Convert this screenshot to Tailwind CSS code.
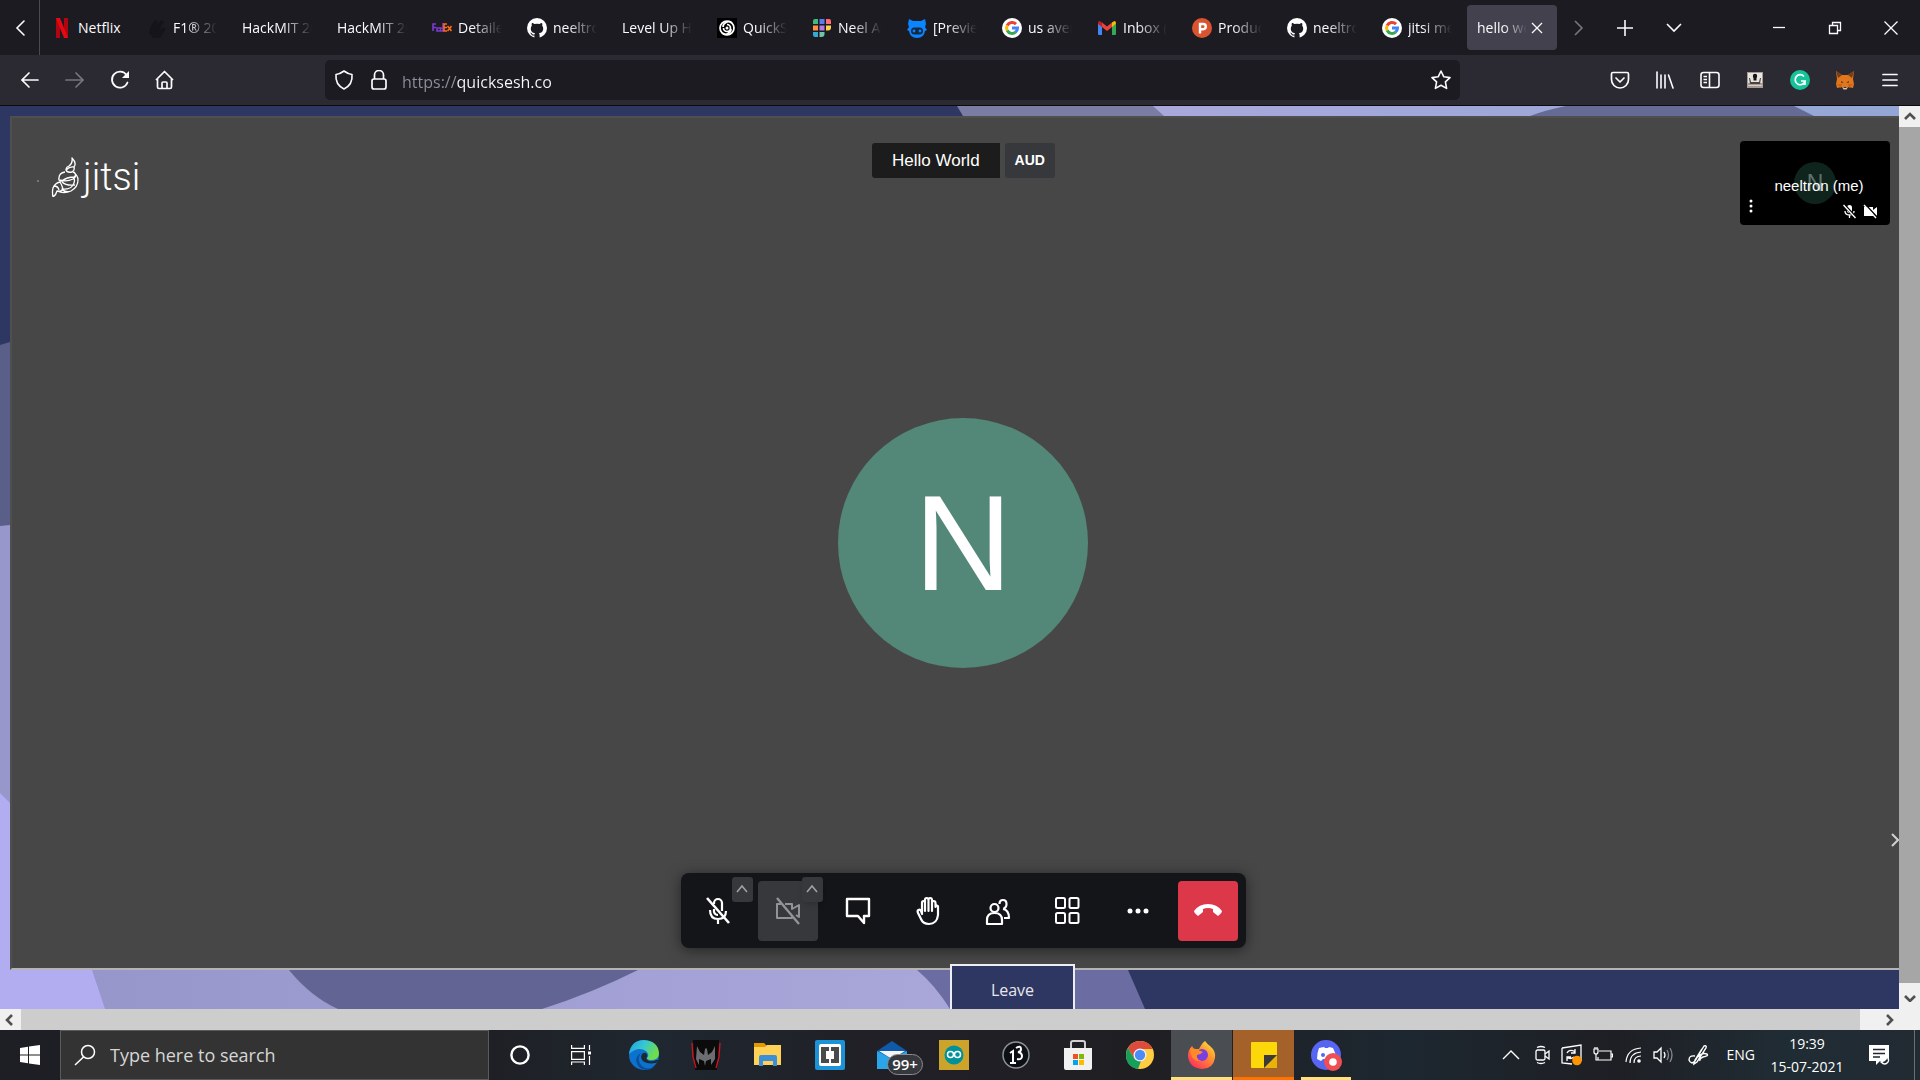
<!DOCTYPE html>
<html lang="en">
<head>
    <meta charset="UTF-8" />
    <meta name="viewport" content="width=device-width, initial-scale=1.0" />
    <title>hello world</title>
    <script src="https://cdn.jsdelivr.net/npm/@tailwindcss/browser@4"></script>
</head>
<body class="h-screen flex flex-col overflow-hidden bg-[#1c1b22] text-[#fbfbfe] font-['Open_Sans','Noto_Sans',sans-serif]">

<!-- shared icons -->
<svg class="hidden">
    <symbol id="github" viewBox="0 0 20 20">
        <circle cx="10" cy="10" r="10" fill="#fff"/>
        <path fill="#1c1b22" d="M7.4 20v-2.6c-2.2.5-2.9-.5-3.3-1.4-.3-.6-.6-1-1.1-1.3 1.1-.3 1.7.4 2.1 1 .6 1 1.5 1 2.4.7.1-.6.3-1 .6-1.3-2.4-.3-4.3-1.400-4.300-4.700 0-1.100.3-2 1-2.700-.2-.7-.2-1.700.1-2.600.9 0 1.900.5 2.600 1a9 9 0 0 1 5 0c.8-.5 1.700-1 2.600-1 .3.9.3 1.900.1 2.600.7.7 1 1.600 1 2.700 0 3.300-1.900 4.400-4.300 4.700.4.4.7 1 .7 2V20z"/>
    </symbol>
    <symbol id="google" viewBox="0 0 20 20">
        <circle cx="10" cy="10" r="10" fill="#fff"/>
        <g fill="none" stroke-width="3">
            <path stroke="#ea4335" d="M5.200 7.500a5.500 5.500 0 0 1 8.800-1.400"/>
            <path stroke="#fbbc05" d="M5.200 12.600a5.500 5.500 0 0 1 0-5.200"/>
            <path stroke="#34a853" d="M13.600 14.200a5.500 5.500 0 0 1-8.400-1.700"/>
            <path stroke="#4285f4" d="M10 10h5.500a5.500 5.500 0 0 1-2 4.200"/>
        </g>
    </symbol>
</svg>

<!-- tab strip -->
<header class="h-[55px] shrink-0 flex items-center text-[14px]">
    <button aria-label="Scroll tabs left" class="w-10 h-full shrink-0 flex items-center justify-center border-r border-[#4a4952]">
        <svg class="size-5" viewBox="0 0 20 20" fill="none" stroke="currentColor" stroke-width="1.600" stroke-linecap="round"><path d="M14 3l-7 7 7 7"/></svg>
    </button>
    <nav class="flex pl-[2px] gap-[5px] shrink-0">
        <button class="w-[90px] h-[45px] px-[10px] flex items-center gap-[6px]">
            <svg class="size-5 shrink-0" viewBox="0 0 20 20"><path fill="#b1060f" d="M4 0h4v20H4zM12 0h4v20h-4z"/><path fill="#e50914" d="M4 0h4l8 20h-4z"/></svg>
            <span>Netflix</span>
        </button>
        <button class="w-[90px] h-[45px] px-[10px] flex items-center gap-[6px]">
            <svg class="size-5 shrink-0" viewBox="0 0 20 20" fill="#15141a"><path d="M4 8l4-6 3 1-3 6 6-7 3 2-5 8 5-3 2 2-6 9H6l-4-5z"/></svg>
            <span class="flex-1 overflow-hidden whitespace-nowrap text-left [mask-image:linear-gradient(to_left,transparent,black_30px)]">F1® 2021</span>
        </button>
        <button class="w-[90px] h-[45px] px-[10px] flex items-center">
            <span class="flex-1 overflow-hidden whitespace-nowrap text-left [mask-image:linear-gradient(to_left,transparent,black_30px)]">HackMIT 2021</span>
        </button>
        <button class="w-[90px] h-[45px] px-[10px] flex items-center">
            <span class="flex-1 overflow-hidden whitespace-nowrap text-left [mask-image:linear-gradient(to_left,transparent,black_30px)]">HackMIT 2021</span>
        </button>
        <button class="w-[90px] h-[45px] px-[10px] flex items-center gap-[6px]">
            <svg class="size-5 shrink-0" viewBox="0 0 20 20"><g fill="none" stroke-width="1.600"><path stroke="#7a3bd0" d="M1 13V6h3M1 9.500h3M8 10H5v3h3M11 5v8H8.500v-3H11"/><path stroke="#ff6a13" d="M15 6h-3v7h3M12 9.500h3M15.500 8l4 5M19.500 8l-4 5"/></g></svg>
            <span class="flex-1 overflow-hidden whitespace-nowrap text-left [mask-image:linear-gradient(to_left,transparent,black_30px)]">Detailed</span>
        </button>
        <button class="w-[90px] h-[45px] px-[10px] flex items-center gap-[6px]">
            <svg class="size-5 shrink-0"><use href="#github"/></svg>
            <span class="flex-1 overflow-hidden whitespace-nowrap text-left [mask-image:linear-gradient(to_left,transparent,black_30px)]">neeltron</span>
        </button>
        <button class="w-[90px] h-[45px] px-[10px] flex items-center">
            <span class="flex-1 overflow-hidden whitespace-nowrap text-left [mask-image:linear-gradient(to_left,transparent,black_30px)]">Level Up Hack</span>
        </button>
        <button class="w-[90px] h-[45px] px-[10px] flex items-center gap-[6px]">
            <svg class="size-5 shrink-0" viewBox="0 0 20 20"><path fill="#000" d="M0 0h20v20H0z"/><g fill="none" stroke="#fff" stroke-width="1.700"><circle cx="10" cy="10" r="7"/><path d="M10 6.500a3.500 3.500 0 1 1-3.500 3.500M15 5c-4-3-9 0-9 4M5 15c4 3 9 0 9-4"/></g><circle cx="10" cy="10" r="1.500" fill="#fff"/></svg>
            <span class="flex-1 overflow-hidden whitespace-nowrap text-left [mask-image:linear-gradient(to_left,transparent,black_30px)]">QuickSesh</span>
        </button>
        <button class="w-[90px] h-[45px] px-[10px] flex items-center gap-[6px]">
            <svg class="size-5 shrink-0" viewBox="0 0 20 20"><path fill="#3dbb7f" d="M1 6V3q0-2 2-2h3v5z"/><path fill="#5b7cf0" d="M7.500 1h5v5h-5z"/><path fill="#ff6b78" d="M14 1h3q2 0 2 2v3h-5z"/><path fill="#ff9240" d="M1 7.500h5v5H1z"/><path fill="#b17be0" d="M7.500 7.500h5v5h-5z"/><path fill="#ffd24a" d="M14 7.500h5v2q0 3-3 3h-2z"/><path fill="#35a7d8" d="M1 14h5v5H3q-2 0-2-2z"/><path fill="#6cc5a8" d="M7.500 14h5v2q0 3-3 3h-2z"/></svg>
            <span class="flex-1 overflow-hidden whitespace-nowrap text-left [mask-image:linear-gradient(to_left,transparent,black_30px)]">Neel Adwani</span>
        </button>
        <button class="w-[90px] h-[45px] px-[10px] flex items-center gap-[6px]">
            <svg class="size-5 shrink-0" viewBox="0 0 20 20"><path fill="#0a84ff" d="M2 1l4 2h8l4-2 1 5-1 3 2 3-2 1q-1 7-8 7t-8-7l-2-1 2-3-1-3z"/><rect x="4" y="9.500" width="12" height="7" rx="3.500" fill="#14283f"/><circle cx="7" cy="13" r="1.400" fill="#0a84ff"/><circle cx="13" cy="13" r="1.400" fill="#0a84ff"/></svg>
            <span class="flex-1 overflow-hidden whitespace-nowrap text-left [mask-image:linear-gradient(to_left,transparent,black_30px)]">[Preview]</span>
        </button>
        <button class="w-[90px] h-[45px] px-[10px] flex items-center gap-[6px]">
            <svg class="size-5 shrink-0"><use href="#google"/></svg>
            <span class="flex-1 overflow-hidden whitespace-nowrap text-left [mask-image:linear-gradient(to_left,transparent,black_30px)]">us average</span>
        </button>
        <button class="w-[90px] h-[45px] px-[10px] flex items-center gap-[6px]">
            <svg class="size-5 shrink-0" viewBox="0 0 20 20"><path fill="#4285f4" d="M1 5l4 3v9H2q-1 0-1-1z"/><path fill="#34a853" d="M15 8l4-3v11q0 1-1 1h-3z"/><path fill="#fbbc04" d="M15 4.500q4-3.500 4 1L15 9z"/><path fill="#c5221f" d="M1 5.500q0-4.500 4-1V9L1 6z"/><path fill="#ea4335" d="M5 4.500l5 4 5-4V9l-5 4-5-4z"/></svg>
            <span class="flex-1 overflow-hidden whitespace-nowrap text-left [mask-image:linear-gradient(to_left,transparent,black_30px)]">Inbox (1)</span>
        </button>
        <button class="w-[90px] h-[45px] px-[10px] flex items-center gap-[6px]">
            <svg class="size-5 shrink-0" viewBox="0 0 20 20"><circle cx="10" cy="10" r="10" fill="#da552f"/><path fill="none" stroke="#fff" stroke-width="2.400" d="M8 15.500V6h3.200a2.500 2.500 0 0 1 0 5.200H8"/></svg>
            <span class="flex-1 overflow-hidden whitespace-nowrap text-left [mask-image:linear-gradient(to_left,transparent,black_30px)]">Product</span>
        </button>
        <button class="w-[90px] h-[45px] px-[10px] flex items-center gap-[6px]">
            <svg class="size-5 shrink-0"><use href="#github"/></svg>
            <span class="flex-1 overflow-hidden whitespace-nowrap text-left [mask-image:linear-gradient(to_left,transparent,black_30px)]">neeltron</span>
        </button>
        <button class="w-[90px] h-[45px] px-[10px] flex items-center gap-[6px]">
            <svg class="size-5 shrink-0"><use href="#google"/></svg>
            <span class="flex-1 overflow-hidden whitespace-nowrap text-left [mask-image:linear-gradient(to_left,transparent,black_30px)]">jitsi meet</span>
        </button>
        <button class="w-[90px] h-[45px] px-[10px] flex items-center rounded-[4px] bg-[#42414d]">
            <span class="flex-1 overflow-hidden whitespace-nowrap text-left [mask-image:linear-gradient(to_left,transparent,black_24px)]">hello world</span>
            <svg class="size-5 shrink-0" viewBox="0 0 20 20" stroke="currentColor" stroke-width="1.300"><path d="M5 5l10 10M15 5L5 15"/></svg>
        </button>
    </nav>
    <div class="flex items-center ml-[11px] shrink-0">
        <button aria-label="Scroll tabs right" class="size-5 text-[#77767e]"><svg viewBox="0 0 20 20" fill="none" stroke="currentColor" stroke-width="1.600"><path d="M7 3l7 7-7 7"/></svg></button>
        <button aria-label="New tab" class="size-5 ml-[27px]"><svg viewBox="0 0 20 20" stroke="currentColor" stroke-width="1.600"><path d="M10 2v16M2 10h16"/></svg></button>
        <button aria-label="List all tabs" class="size-5 ml-[29px]"><svg viewBox="0 0 20 20" fill="none" stroke="currentColor" stroke-width="1.600"><path d="M3 6l7 7 7-7"/></svg></button>
    </div>
    <div class="flex items-center gap-9 ml-auto pr-[19px] shrink-0">
        <button aria-label="Minimize" class="size-5"><svg viewBox="0 0 20 20" stroke="currentColor" stroke-width="1.300"><path d="M4 9.500h12"/></svg></button>
        <button aria-label="Restore" class="size-5"><svg viewBox="0 0 20 20" fill="none" stroke="currentColor" stroke-width="1.300"><path d="M4.500 7.500h8v8h-8zM7.500 7.500v-3h8v8h-3"/></svg></button>
        <button aria-label="Close" class="size-5"><svg viewBox="0 0 20 20" stroke="currentColor" stroke-width="1.300"><path d="M3.500 3.500l13 13M16.500 3.500l-13 13"/></svg></button>
    </div>
</header>

<!-- navigation bar -->
<div class="h-[51px] shrink-0 flex items-center bg-[#2b2a33] border-b border-[#0c0c0d] px-5">
    <div class="flex gap-[25px] w-[305px] shrink-0">
        <button aria-label="Back" class="size-5"><svg viewBox="0 0 20 20" fill="none" stroke="currentColor" stroke-width="1.700" stroke-linecap="round"><path d="M18 10H2M9 3l-7 7 7 7"/></svg></button>
        <button aria-label="Forward" class="size-5 text-[#77767e]"><svg viewBox="0 0 20 20" fill="none" stroke="currentColor" stroke-width="1.700" stroke-linecap="round"><path d="M1 10h17M11 3l7 7-7 7"/></svg></button>
        <button aria-label="Reload" class="size-5"><svg viewBox="0 0 20 20" fill="none" stroke="currentColor" stroke-width="1.800" stroke-linecap="round"><path d="M17.500 12.500a8 8 0 1 1-1-7.500"/><path fill="currentColor" stroke="none" d="M19 1v7h-7z"/></svg></button>
        <button aria-label="Home" class="size-5"><svg viewBox="0 0 20 20" fill="none" stroke="currentColor" stroke-width="1.700" stroke-linejoin="round"><path d="M1 10l8.500-8.500L18 10M2.500 8.500V17q0 1.500 1.500 1.500h11q1.500 0 1.500-1.500V8.500M7 18v-5q0-1 1-1h3q1 0 1 1v5"/></svg></button>
    </div>
    <div class="flex items-center h-10 w-[1135px] rounded-[5px] bg-[#1c1b22] px-[9px]">
        <svg class="size-5 shrink-0" viewBox="0 0 20 20" fill="none" stroke="currentColor" stroke-width="1.600" stroke-linejoin="round"><path d="M10 1q4 3 8 3.500 1 10-8 14.500Q1 14.500 2 4.500 6 4 10 1z"/></svg>
        <svg class="size-5 ml-[15px] shrink-0" viewBox="0 0 20 20" fill="none" stroke="currentColor" stroke-width="1.700"><rect x="3" y="9" width="14" height="10" rx="2"/><path d="M5.500 9V5a4.500 4.500 0 0 1 9 0v4"/></svg>
        <input type="text" aria-label="Address" value="https://quicksesh.co" class="flex-1 ml-[13px] pt-[3px] text-base outline-none bg-clip-text text-transparent bg-[linear-gradient(90deg,#8f8f9d_55px,#fbfbfe_55px)]" />
        <button aria-label="Bookmark" class="size-5"><svg viewBox="0 0 20 20" fill="none" stroke="currentColor" stroke-width="1.600" stroke-linejoin="round"><path d="M10 1l2.700 5.700 6.300.9-4.600 4.300 1.200 6.500L10 15.300l-5.600 3.100 1.200-6.500L1 7.600l6.300-.9z"/></svg></button>
    </div>
    <div class="flex gap-[25px] ml-auto shrink-0">
        <button aria-label="Pocket" class="size-5"><svg viewBox="0 0 20 20" fill="none" stroke="currentColor" stroke-width="1.700" stroke-linecap="round" stroke-linejoin="round"><path d="M3 2.500h14q1.500 0 1.500 1.500v5.500a8.500 8.500 0 0 1-17 0V4q0-1.500 1.500-1.500zM6 8l4 4 4-4"/></svg></button>
        <button aria-label="Library" class="size-5"><svg viewBox="0 0 20 20" fill="none" stroke="currentColor" stroke-width="1.600" stroke-linecap="round"><path d="M2 2v16M6 5v13M10 5v13M13.500 5L18 18"/></svg></button>
        <button aria-label="Sidebars" class="size-5"><svg viewBox="0 0 20 20" fill="none" stroke="currentColor" stroke-width="1.600"><rect x="1" y="2.500" width="18" height="15" rx="2.500"/><path d="M9.500 2.500v15M3.500 6.500h3.500M3.500 9.500h3.500M3.500 12.500h3.500"/></svg></button>
        <button aria-label="Extension" class="size-5"><svg viewBox="0 0 20 20"><path fill="#a89a90" d="M2 2h16v16H2z"/><path fill="#e8e4e0" d="M3 3h14v10H3z"/><circle cx="10" cy="6" r="2.200" fill="#141414"/><path fill="#141414" d="M8.500 7h3v3.500h-3z"/><path fill="#4a4340" d="M4 8l1 0 1 4h8l1-4h1l-1 6H5z"/><path fill="#d8cfc8" d="M3 15h14v1H3z"/></svg></button>
        <button aria-label="Grammarly" class="size-5"><svg viewBox="0 0 20 20"><circle cx="10" cy="10" r="10" fill="#15c39a"/><path fill="none" stroke="#fff" stroke-width="1.700" d="M14 6.500a5 5 0 1 0 1 4.500h-4M15 10.500V15"/></svg></button>
        <button aria-label="MetaMask" class="size-5"><svg viewBox="0 0 20 20"><path fill="#e2761b" d="M1 1l6 4h6l6-4-1 8 1 5-1 4-5-1-2 2H9l-2-2-5 1-1-4 1-5z"/><path fill="#763d16" d="M1 1l6 4-4 3zM19 1l-6 4 4 3z"/><path fill="#cd6116" d="M2 14h5l-1 4zM18 14h-5l1 4z"/><path fill="#233447" d="M6 11l2.500 1.500L6.500 13zM14 11l-2.500 1.500 2 .5zM8.500 17h3l-.5 1.500H9z"/><path fill="#d7c1b3" d="M7 17l2 1h2l2-1-1.500 2.500h-3z"/></svg></button>
        <button aria-label="Menu" class="size-5"><svg viewBox="0 0 20 20" stroke="currentColor" stroke-width="1.700" stroke-linecap="round"><path d="M3 4.500h14M3 10h14M3 15.500h14"/></svg></button>
    </div>
</div>

<!-- page with its scrollbars -->
<main class="flex-1 min-h-0 grid grid-cols-[1fr_21px] grid-rows-[1fr_21px]">
    <div class="relative overflow-hidden flex flex-col pt-[10px] pl-[10px] bg-[#2e3761]">
        <!-- wallpaper -->
        <svg class="absolute inset-0 size-full" viewBox="0 0 1899 903" preserveAspectRatio="none">
            <defs>
                <linearGradient id="sky"><stop offset="0" stop-color="#a9a8db"/><stop offset="1" stop-color="#94a6d6"/></linearGradient>
                <linearGradient id="lilac"><stop offset="0" stop-color="#9796cb"/><stop offset="1" stop-color="#a9a7da"/></linearGradient>
            </defs>
            <path fill="#7a7ca4" d="M957 0h250v10H963z"/>
            <path fill="url(#sky)" d="M1153 0h746v10h-735z"/>
            <path fill="#656b94" d="M1530 10q16-6 36-10h228l20 10z"/>
            <path fill="#5a5f89" d="M0 239l10-3v190H0z"/>
            <path fill="#9897cc" d="M0 420l10-1v300H0z"/>
            <path fill="url(#lilac)" d="M80 864h870v39H80z"/>
            <path fill="#b2adf1" d="M0 687l10 10v167h82l13 39H0z"/>
            <path fill="#626594" d="M289 864q22 27 49 39h204q50-16 96-39z"/>
            <path fill="#6b6da2" d="M917 864h211l17 39H950q-15-24-33-39z"/>
        </svg>

        <!-- meeting -->
        <section class="relative flex-1 -mr-[17px] flex flex-col justify-between border-2 border-[#4f4f4f] border-b-[#b4b4b4] bg-[#474747] font-['Liberation_Sans',sans-serif]">
            <div class="absolute inset-0 flex items-center justify-center">
                <div class="size-[250px] rounded-full bg-[#538777] flex items-center justify-center text-[136px] text-white">N</div>
            </div>
            <div class="relative flex items-start justify-between pl-[25px] pr-6 pt-[23px]">
                <a href="#" class="flex-1 flex items-center gap-3 text-white">
                    <span class="size-[2px] mt-6 bg-[#777]"></span>
                    <span class="flex items-center pt-4">
                        <svg class="w-8 h-10" viewBox="0 0 32 40" fill="none" stroke="#fff" stroke-width="1.300" stroke-linejoin="round"><path d="M21 1q5 5 2 9 1 3-2 5-5 1-6-2 0-3 3-4 4-3 3-8zM15 13q4-4 8-3M14 15q-6 1-6 6-1 3 3 3 5-4 12-4 3-2 0-5M22 15q5 3 5 8 0 7-7 11-6 2-9-2 8 1 11-4 3-5 0-8M8 23q8 2 14-1 5-3 1-7M11 25q4 4 13 3M9 25q-5 1-7 6-1 4 0 9 3-2 4-6 5 1 6-2-1-4-3-7zM3 29q4 0 5 4M6 34q7 3 14 0"/></svg>
                        <span class="text-[38px] leading-10 font-light font-['Roboto',sans-serif]">jitsi</span>
                    </span>
                </a>
                <div class="flex gap-[5px] pt-[2px] leading-[35px]">
                    <div class="px-5 rounded-l-[3px] bg-[#1c1c1c] text-[17px] leading-[35px] text-white">Hello World</div>
                    <div class="px-[10px] rounded-[3px] bg-[#36383c] text-[14px] leading-[35px] font-bold text-white">AUD</div>
                </div>
                <div class="flex-1 flex justify-end">
                    <div class="relative w-[150px] h-[84px] rounded-[4px] bg-black">
                        <div class="absolute inset-0 flex items-center justify-center">
                            <div class="size-[42px] rounded-full bg-[#10241e] text-[#60716b] text-[23px] flex items-center justify-center">N</div>
                        </div>
                        <div class="absolute inset-x-0 top-9 pl-2 text-center text-[15px] leading-[18px] text-white">neeltron (me)</div>
                        <svg class="absolute left-1 bottom-3 size-[14px]" viewBox="0 0 14 14" fill="#fff"><circle cx="7" cy="2" r="1.500"/><circle cx="7" cy="7" r="1.500"/><circle cx="7" cy="12" r="1.500"/></svg>
                        <div class="absolute right-3 bottom-[6px] flex gap-[6px]">
                            <svg class="size-[15px]" viewBox="0 0 15 15" fill="#fff"><rect x="5" y="1" width="5" height="8" rx="2.500"/><path fill="none" stroke="#fff" stroke-width="1.300" d="M3 7q0 4 4.500 4T12 7M7.500 11v3"/><path stroke="#000" stroke-width="3" d="M2 1l12 13"/><path stroke="#fff" stroke-width="1.400" d="M1.500 1l12 13"/></svg>
                            <svg class="size-[15px]" viewBox="0 0 15 15" fill="#fff"><path d="M1 3h9v3l4-3v9l-4-2v2H1z"/><path stroke="#000" stroke-width="1.500" d="M2 0l13 14"/><path stroke="#fff" stroke-width="1.400" d="M1 1l12 13"/></svg>
                        </div>
                    </div>
                </div>
            </div>
            <button aria-label="Hide filmstrip" class="absolute right-3 bottom-[120px] w-3 h-4"><svg viewBox="0 0 12 16" fill="none" stroke="#d0d0d0" stroke-width="2"><path d="M2 2l6 6-6 6"/></svg></button>

            <!-- call controls -->
            <div class="relative mx-auto mb-5 h-[75px] pl-[7px] pr-2 flex items-center gap-[10px] rounded-lg bg-[#141519] shadow-[0_2px_14px_rgba(0,0,0,0.5)] text-white">
                <div class="relative">
                    <button aria-label="Unmute" class="size-[60px] flex items-center justify-center">
                        <svg class="size-[30px]" viewBox="0 0 30 30" fill="none" stroke="currentColor" stroke-width="2.200"><path d="M11 8V7a4 4 0 0 1 8 0v8M11 13v3q1 3 4 3M7 14q0 9 8 9t8-8M15 23v5"/><path stroke-width="2.600" d="M4 2l22 25"/></svg>
                    </button>
                    <button aria-label="Audio settings" class="absolute -top-1 right-[-5px] w-[21px] h-[25px] rounded-[3px] bg-[#36383c] text-[#a0a1a4] flex items-center justify-center"><svg class="size-3" viewBox="0 0 12 12" fill="none" stroke="currentColor" stroke-width="1.600"><path d="M1 9l5-6 5 6"/></svg></button>
                </div>
                <div class="relative">
                    <button aria-label="Start camera" class="size-[60px] rounded-[4px] bg-[#36383c] text-[#929396] flex items-center justify-center">
                        <svg class="size-[30px]" viewBox="0 0 30 30" fill="none" stroke="currentColor" stroke-width="2" stroke-linejoin="round"><path d="M8 8H4v14h15v-2M12 8h7v5l7-4v12l-3-2"/><path stroke-width="2.400" d="M4 2l22 26"/></svg>
                    </button>
                    <button aria-label="Video settings" class="absolute -top-1 right-[-5px] w-[21px] h-[25px] rounded-[3px] bg-[#36383c] text-[#a0a1a4] shadow-md flex items-center justify-center"><svg class="size-3" viewBox="0 0 12 12" fill="none" stroke="currentColor" stroke-width="1.600"><path d="M1 9l5-6 5 6"/></svg></button>
                </div>
                <button aria-label="Chat" class="size-[60px] flex items-center justify-center">
                    <svg class="size-[30px]" viewBox="0 0 30 30" fill="none" stroke="currentColor" stroke-width="2.400" stroke-linejoin="round"><path d="M4 3h22v17h-5v7l-6-7H4z"/></svg>
                </button>
                <button aria-label="Raise hand" class="size-[60px] flex items-center justify-center">
                    <svg class="size-[30px]" viewBox="0 0 30 30" fill="none" stroke="currentColor" stroke-width="2.200" stroke-linejoin="round" stroke-linecap="round"><path d="M9 18V7q0-2 1.500-2T12 7v8V4q0-2 1.700-2T15.500 4v11V4q0-2 1.700-2T19 4v11V7q0-2 1.700-2T22.500 7v4q0-1.500 1.300-1.500T25 11v8q-1 9-9 9-6 0-8-5l-3-6q-1-2 .5-3T8 15z"/></svg>
                </button>
                <button aria-label="Participants" class="size-[60px] flex items-center justify-center">
                    <svg class="size-[30px]" viewBox="0 0 30 30" fill="none" stroke="currentColor" stroke-width="2.200" stroke-linejoin="round"><circle cx="11.500" cy="12" r="4"/><path d="M4 28v-4q0-7 7.500-7t7.500 7v4zM16.500 8q0-4 3.500-4t3.500 4-3 4M20 13q6 1 6 9h-5"/></svg>
                </button>
                <button aria-label="Tile view" class="size-[60px] flex items-center justify-center">
                    <svg class="size-[30px]" viewBox="0 0 30 30" fill="none" stroke="currentColor" stroke-width="2"><rect x="3" y="2" width="9" height="10" rx="1.500"/><rect x="16.500" y="2" width="9" height="10" rx="1.500"/><rect x="3" y="17" width="9" height="10" rx="1.500"/><rect x="16.500" y="17" width="9" height="10" rx="1.500"/></svg>
                </button>
                <button aria-label="More actions" class="size-[60px] flex items-center justify-center">
                    <svg class="size-[30px]" viewBox="0 0 30 30" fill="currentColor"><circle cx="7" cy="15" r="2.500"/><circle cx="15" cy="15" r="2.500"/><circle cx="23" cy="15" r="2.500"/></svg>
                </button>
                <button aria-label="Leave the meeting" class="size-[60px] rounded-[4px] bg-[#dd3849] flex items-center justify-center">
                    <svg class="size-[30px]" viewBox="0 0 30 30" fill="currentColor"><path d="M1 15q5-7 14-7t14 7q0 2-4 5l-5-4v-3q-5-2-10 0v3l-5 4q-4-3-4-5z"/></svg>
                </button>
            </div>
        </section>

        <div class="relative h-[39px] shrink-0 flex items-start justify-center pl-[116px]">
            <button class="-mt-[6px] w-[125px] h-[52px] shrink-0 border-2 border-[#ededf3] bg-[#2e3761] text-base text-[#e6e7ee]">Leave</button>
        </div>
    </div>

    <div class="flex flex-col items-center bg-[#a6a6a6] text-[#505050]">
        <div class="w-full h-[21px] bg-[#f0f0f0] flex items-center justify-center"><svg class="size-3" viewBox="0 0 12 12" fill="none" stroke="currentColor" stroke-width="2.600"><path d="M1 8l5-5 5 5"/></svg></div>
        <div class="w-full h-[26px] mt-auto bg-[#f0f0f0] flex items-center justify-center"><svg class="size-3" viewBox="0 0 12 12" fill="none" stroke="currentColor" stroke-width="2.600"><path d="M1 6l5 5 5-5"/></svg></div>
    </div>
    <div class="col-span-2 flex bg-[#f0f0f0] text-[#505050]">
        <div class="w-[21px] flex items-center justify-center"><svg class="size-3" viewBox="0 0 12 12" fill="none" stroke="currentColor" stroke-width="2.600"><path d="M7 1L2 6l5 5"/></svg></div>
        <div class="flex-1 bg-[#cdcdcd]"></div>
        <div class="w-[60px] flex items-center pl-6"><svg class="size-3" viewBox="0 0 12 12" fill="none" stroke="currentColor" stroke-width="2.600"><path d="M3 1l5 5-5 5"/></svg></div>
    </div>
</main>

<!-- taskbar -->
<footer class="h-[50px] shrink-0 flex items-stretch bg-[linear-gradient(90deg,#1e1f24_0%,#1e1f24_25%,#1f2730_34%,#202026_45%,#1f1e23_60%,#1d2730_73%,#1e1f24_84%,#202c34_93%,#222a32_100%)] text-white">
    <button aria-label="Start" class="w-[60px] shrink-0 flex items-center justify-center">
        <svg class="size-5" viewBox="0 0 20 20" fill="#fff"><path d="M0 3l8-1.200V9.500H0zM9 1.600L20 0v9.500H9zM0 10.500h8v7.700L0 17zM9 10.500h11V20L9 18.400z"/></svg>
    </button>
    <label class="w-[429px] shrink-0 flex items-center pl-[13px] border border-[#5a5a5a] bg-[#333]">
        <svg class="size-[22px]" viewBox="0 0 22 22" fill="none" stroke="#fff" stroke-width="1.500"><circle cx="14" cy="8" r="6.500"/><path d="M9.500 13L1 21"/></svg>
        <input type="text" aria-label="Search" placeholder="Type here to search" class="flex-1 ml-[14px] text-lg text-white placeholder:text-[#d6d6d6] outline-none" />
    </label>
    <nav class="flex items-stretch">
        <button aria-label="Cortana" class="w-[62px] flex items-center justify-center"><svg class="size-[22px]" viewBox="0 0 22 22" fill="none" stroke="#fff" stroke-width="2.400"><circle cx="11" cy="11" r="8.600"/></svg></button>
        <button aria-label="Task view" class="w-[60px] mr-[2px] flex items-center justify-center"><svg class="size-5" viewBox="0 0 20 20" fill="none" stroke="#fff" stroke-width="1.200"><path d="M.6 0v3.400h12.800V0M.6 6.600h12.800v7.800H.6zM.6 20v-3h12.800v3M18.500 0v5M18.500 11v9"/><path fill="#fff" stroke="none" d="M17 6.500h3v3h-3z"/></svg></button>
        <button aria-label="Edge" class="w-[62px] flex items-center justify-center">
            <svg class="size-[30px]" viewBox="0 0 30 30"><defs><linearGradient id="edge-a" x1="0" x2="1" y1="0" y2=".4"><stop offset="0" stop-color="#1c9ee0"/><stop offset=".5" stop-color="#36c6d4"/><stop offset="1" stop-color="#6fdd4b"/></linearGradient></defs><circle cx="15" cy="15" r="15" fill="#0c72cf"/><path fill="url(#edge-a)" d="M0 14Q2 0 15 0q14 1 15 13 0 7-7 7-5 0-5-2 3-3-1-7-8-5-17 3z"/><path fill="#0a4f9c" d="M12 13q-5 7 1 13 6 5 13 0-3 4-9 4-9-1-10-10 1-5 5-7z"/><path fill="#1f2730" d="M12 17q1-5 5-4 2 2 1 4-2 2 2 4 4 1 7-1l3 0-3 3q-14 2-15-6z"/></svg>
        </button>
        <button aria-label="PredatorSense" class="w-[62px] flex items-center justify-center">
            <svg class="size-[30px]" viewBox="0 0 30 30"><path fill="#0b0b0c" d="M2 0h26l-2 30H4z"/><path fill="none" stroke="#d5121c" stroke-width="1.300" d="M1 3l1 14 3 11M29 3l-1 14-3 11"/><path fill="#6c6d70" d="M6 6l3 6 4 3 1-6 1-1 1 1 1 6 4-3 3-6v13l-4 6v-6l-5 2-1 5-1-5-5-2v6l-3-6z"/></svg>
        </button>
        <button aria-label="File Explorer" class="w-[62px] flex items-center justify-center">
            <svg class="size-[30px]" viewBox="0 0 30 30"><path fill="#e29a00" d="M1 3h10l3 3v4H1z"/><path fill="#ffd257" d="M1 7h11l2-2h14v20H1z"/><path fill="#3b8ed8" d="M6 26V17q0-2 2-2h14q2 0 2 2v9h-4v-5H10v5z"/></svg>
        </button>
        <button aria-label="Brackets" class="w-[62px] flex items-center justify-center">
            <svg class="size-[30px]" viewBox="0 0 30 30"><rect width="30" height="30" rx="2" fill="#1b93d6"/><rect x="4" y="4" width="22" height="22" rx="2" fill="#fff"/><path fill="#4a4a4a" d="M6 7h8v4h-3v8h3v4H6zM24 7h-8v4h3v8h-3v4h8z"/></svg>
        </button>
        <button aria-label="Mail" class="relative w-[62px] flex items-center justify-center">
            <svg class="size-[30px]" viewBox="0 0 30 30"><path fill="#0f5aa8" d="M0 11L15 1l15 10v6H0z"/><path fill="#2ba5ea" d="M0 11l15 8 15-8v18H0z"/><path fill="#f5f5f5" d="M2 11h26l-13 8z"/></svg>
            <span class="absolute left-[26px] top-6 w-9 h-[21px] rounded-full border border-[#8b8d90] bg-[#35383d] text-[15px] leading-[18px] font-semibold">99+</span>
        </button>
        <button aria-label="Arduino" class="w-[62px] flex items-center justify-center">
            <svg class="size-[30px]" viewBox="0 0 30 30"><path fill="#cda42b" d="M0 0h30v30H0z"/><circle cx="15" cy="15" r="9.500" fill="#009298"/><g fill="none" stroke="#fff" stroke-width="1.500"><circle cx="11.500" cy="14.500" r="3"/><circle cx="18.500" cy="14.500" r="3"/></g></svg>
        </button>
        <button aria-label="Processing" class="w-[62px] flex items-center justify-center">
            <svg class="size-[28px]" viewBox="0 0 28 28"><circle cx="14" cy="14" r="13" fill="#0c1014" stroke="#8e9296" stroke-width="1.500"/><path fill="none" stroke="#fff" stroke-width="2" d="M8 12l3-2v12M8 22h6M14 7q5-3 5 1 0 3-3 3 4 1 4 4 0 4-5 3"/></svg>
        </button>
        <button aria-label="Microsoft Store" class="w-[62px] flex items-center justify-center">
            <svg class="size-[30px]" viewBox="0 0 30 30"><path fill="none" stroke="#d0d0d2" stroke-width="2" d="M8 10V3q0-2 2-2h10q2 0 2 2v7"/><path fill="#f1f1f2" d="M1 8h28v20q0 2-2 2H3q-2 0-2-2z"/><path fill="#f25022" d="M10 14h5v5h-5z"/><path fill="#7fba00" d="M16 14h5v5h-5z"/><path fill="#00a4ef" d="M10 20h5v5h-5z"/><path fill="#ffb900" d="M16 20h5v5h-5z"/></svg>
        </button>
        <button aria-label="Chrome" class="w-[62px] flex items-center justify-center">
            <svg class="size-[28px]" viewBox="0 0 28 28"><circle cx="14" cy="14" r="14" fill="#ffcd40"/><path fill="#dd4b3e" d="M2 7q4-7 12-7 9 0 12.500 8H14L8 17z"/><path fill="#169f5b" d="M2 7l6 10q2 3 7 3l-3 8Q0 26 0 14q0-4 2-7z"/><circle cx="14" cy="14" r="6.500" fill="#f1f1f1"/><circle cx="14" cy="14" r="5.200" fill="#4b8bf5"/></svg>
        </button>
        <button aria-label="Firefox" class="w-[61px] mr-px flex items-center justify-center bg-[#4a4d52] border-b-3 border-[#ffe07a] pt-[3px]">
            <svg class="size-[30px]" viewBox="0 0 30 30"><defs><linearGradient id="fx" x1="1" x2=".2" y1="0" y2="1"><stop offset="0" stop-color="#fff44f"/><stop offset=".4" stop-color="#ff9a2b"/><stop offset="1" stop-color="#ff2a5f"/></linearGradient></defs><path fill="url(#fx)" d="M18 1q3 4 5 5 6 5 5 12-2 11-13 11Q2 28 1 16q0-6 4-10l2 3 5 0q3-6 6-8z"/><circle cx="15" cy="15" r="6" fill="#7a3fe0"/><path fill="#ff8a26" d="M3 8l6 1 7 3q-3 3-6 3-1 4 4 6-8 1-10-7z"/></svg>
        </button>
        <button aria-label="Sticky Notes" class="w-[61px] mr-px flex items-center justify-center bg-[#a5612a] border-b-3 border-[#ff7200] pt-[3px]">
            <svg class="size-[26px]" viewBox="0 0 26 26"><path fill="#fcd80a" d="M0 1q0-1 1-1h24q1 0 1 1v24q0 1-1 1H1q-1 0-1-1z"/><path fill="#eab308" d="M13 26V13h13v12q0 1-1 1z"/><path fill="#3b3a39" d="M13 26V13h13z"/></svg>
        </button>
        <button aria-label="Discord" class="w-[50px] ml-[6px] flex items-center justify-center border-b-3 border-[#ffe07a] pt-[3px]">
            <svg class="size-[31px]" viewBox="0 0 31 31"><circle cx="15" cy="15" r="15" fill="#5865f2"/><path fill="#fff" d="M8 8l5-1 1 1h3l1-1 4 1q3 5 3 11l-4 2-2-2h-7l-2 2-4-2q0-6 2-11z"/><circle cx="12" cy="15" r="2" fill="#5865f2"/><circle cx="22" cy="22" r="9" fill="#ed4f55"/><circle cx="22" cy="22" r="3.800" fill="#fff"/></svg>
        </button>
    </nav>
    <div class="ml-auto flex items-center shrink-0">
        <div class="flex items-center gap-[10px]">
            <svg class="size-5" viewBox="0 0 20 20" fill="none" stroke="#fff" stroke-width="1.400"><path d="M2 14l8-8 8 8"/></svg>
            <svg class="size-5" viewBox="0 0 20 20" fill="none" stroke="#fff" stroke-width="1.300"><rect x="5" y="5" width="9" height="10" rx="1.500"/><path d="M14 9l4-3v8l-4-3M6 2.500q4-2 8 0M6 17.500q4 2 8 0"/></svg>
            <svg class="size-[22px]" viewBox="0 0 22 22" fill="none" stroke="#fff" stroke-width="1.300"><path d="M1 4l19-3v16M1 4v15l10 1M6 9q2-4 7-2l1 2M14 5v4h-4M13 13q-4 3-7 0M6 17v-4h4"/><circle cx="16" cy="16.500" r="4.800" fill="#ff9500" stroke="none"/></svg>
            <svg class="size-5" viewBox="0 0 20 20" fill="none" stroke="#fff" stroke-width="1.200"><path d="M6 6h12v9H5v-3M18 9h1.500v3H18M1 4v3q0 2 2 2t2-2V4H1zM2 2v2M4 2v2M3 9v6h2"/></svg>
            <svg class="size-5" viewBox="0 0 20 20" fill="none" stroke="#fff" stroke-width="1.200"><path d="M3 17Q4 4 18 3M7 18Q7 8 18 7M11 18q0-7 7-7"/><circle cx="16" cy="16" r="1.800" fill="#fff" stroke="none"/></svg>
            <svg class="size-5" viewBox="0 0 20 20" fill="none" stroke="#fff" stroke-width="1.300"><path d="M1 7h3l4-4v14l-4-4H1zM11 7q2 3 0 6"/><path stroke="#85878a" d="M14 5q3 5 0 10M17 3q4 7 0 14"/></svg>
        </div>
        <svg class="size-[22px] ml-[14px]" viewBox="0 0 22 22" fill="none" stroke="#fff" stroke-width="1.400"><path d="M8 12Q2 11 2 16q2 5 6 1 3-5 9-15 3-1 2 2L10 18l-3 2 1-4L15 5M11 13q4-5 9-3 2 2-4 3-4 2-3 4"/></svg>
        <span class="ml-[18px] text-sm">ENG</span>
        <div class="ml-3 w-20 text-center text-sm leading-[23px]"><div>19:39</div><div>15-07-2021</div></div>
        <button aria-label="Notifications" class="ml-[21px]"><svg class="size-[22px]" viewBox="0 0 22 22"><path fill="#fff" d="M1 1h20v16h-9l-4 4v-4H1z"/><path stroke="#1f2730" stroke-width="1.400" d="M5 5.500h12M5 9.500h12M5 13h7"/><path fill="#222a32" stroke="#fff" stroke-width="1.300" d="M17 11q4 5-4 7 4 4 7 0 2-3-3-7z"/></svg></button>
        <span class="ml-6 mr-[5px] w-px h-[50px] bg-[#6b7076]"></span>
    </div>
</footer>

</body>
</html>
